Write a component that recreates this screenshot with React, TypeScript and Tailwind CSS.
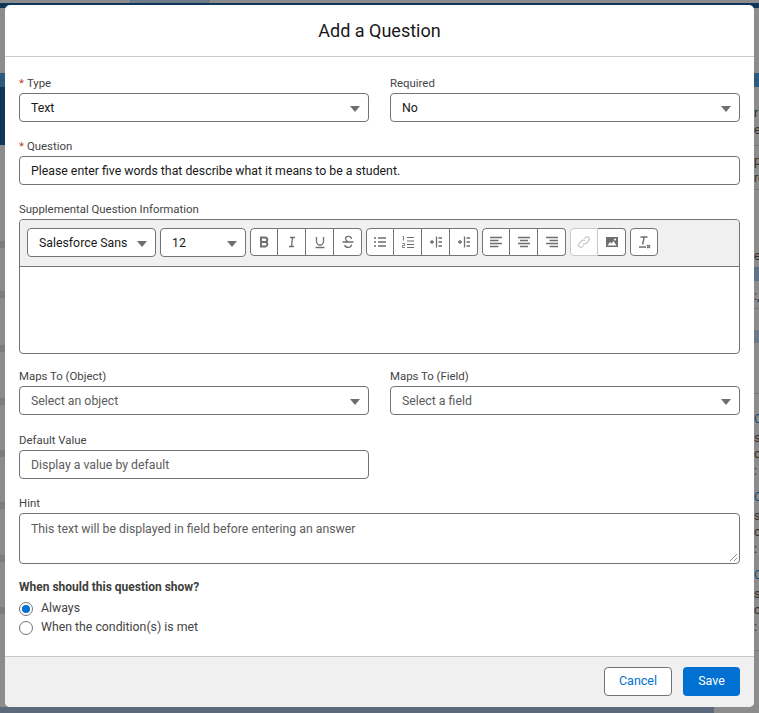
const labelCls = "block text-[11.4px] leading-[17px] text-[#444] mb-[1px]";
const fieldCls = "h-[29px] pt-[2px] rounded-[4px] border border-[#747474] bg-white flex items-center text-[12.3px]";

// bits of the dimmed page behind the modal
const LEFT_BANDS = [241, 291, 345, 398, 450, 502, 555, 607];
const RIGHT_TEXT = [
  { y: 105, t: "r" }, { y: 122, t: "es" }, { y: 153, t: "p" }, { y: 170, t: "re" }, { y: 248, t: "e" },
  { y: 288, t: ":," }, { y: 411, t: "C", link: true }, { y: 430, t: "st" }, { y: 446, t: "ol" }, { y: 463, t: ":" },
  { y: 489, t: "C", link: true }, { y: 508, t: "st" }, { y: 524, t: "ol" }, { y: 541, t: ":" },
  { y: 567, t: "C", link: true }, { y: 586, t: "st" }, { y: 602, t: "ol" }, { y: 619, t: ":" },
];
const RIGHT_LINES = [145, 189, 308, 393, 650];

function Caret() {
  return <span className="w-0 h-0 border-x-[5px] border-x-transparent border-t-[6px] border-t-[#706e6b]" />;
}

function Label({ text, required }: { text: string; required?: boolean }) {
  return (
    <label className={labelCls}>
      {required && <span className="text-[#c23934] mr-[3px]">*</span>}
      {text}
    </label>
  );
}

function SelectBox({ label, value, required, muted }: { label: string; value: string; required?: boolean; muted?: boolean }) {
  return (
    <div className="flex-1 min-w-0">
      <Label text={label} required={required} />
      <div className={`${fieldCls} justify-between pl-[11px] pr-[8px] ${muted ? "text-[#5c5c5c]" : "text-[#181818]"}`}>
        <span>{value}</span>
        <Caret />
      </div>
    </div>
  );
}

function ToolBtn({ children, first, last, disabled }: { children: React.ReactNode; first?: boolean; last?: boolean; disabled?: boolean }) {
  return (
    <button
      className={`w-[28px] h-[28px] flex items-center justify-center border-y border-r bg-white ${disabled ? "border-[#c9c9c9]" : "border-[#747474]"} ${first ? "border-l rounded-l-[4px]" : ""} ${last ? "rounded-r-[4px]" : ""}`}
    >
      {children}
    </button>
  );
}

function Ico({ children }: { children: React.ReactNode }) {
  return (
    <svg viewBox="0 0 14 14" className="w-[14px] h-[14px]" fill="none" stroke="#706e6b" strokeWidth="1.3">
      {children}
    </svg>
  );
}

function Toolbar() {
  return (
    <div className="h-[47px] bg-[#f0f0f0] border-b border-[#747474] rounded-t-[4px] flex items-start gap-[4px] pt-[8px] px-[7px]">
      <div className={`${fieldCls} w-[129px] justify-between pl-[11px] pr-[8px] text-[#181818]`}>
        <span>Salesforce Sans</span>
        <Caret />
      </div>
      <div className={`${fieldCls} w-[86px] justify-between pl-[11px] pr-[8px] text-[#181818]`}>
        <span>12</span>
        <Caret />
      </div>
      <div className="flex">
        <ToolBtn first>
          <Ico>
            <path d="M4 2.5h4a2.2 2.2 0 0 1 0 4.5H4zM4 7h4.6a2.3 2.3 0 0 1 0 4.5H4z" strokeWidth="1.9" />
          </Ico>
        </ToolBtn>
        <ToolBtn>
          <Ico>
            <path d="M5 2.5h5M4 11.5h5M7.5 2.5l-1 9" />
          </Ico>
        </ToolBtn>
        <ToolBtn>
          <Ico>
            <path d="M3.5 2v4.5a3.5 3.5 0 0 0 7 0V2M2.5 12.5h9" />
          </Ico>
        </ToolBtn>
        <ToolBtn last>
          <Ico>
            <path d="M10.5 4a3 2.5 0 0 0-6-.3c0 1.4 1 2 2.5 3.3M1.5 7h11M10.5 9.5c0 2-1.5 2.8-3.5 2.8s-3-1-3.3-2.3" />
          </Ico>
        </ToolBtn>
      </div>
      <div className="flex">
        <ToolBtn first>
          <Ico>
            <path d="M5 3h8M5 7h8M5 11h8M1 3h2M1 7h2M1 11h2" />
          </Ico>
        </ToolBtn>
        <ToolBtn>
          <Ico>
            <path d="M6 2.5h7M6 6h7M6 9.5h7M6 12.5h7" strokeWidth="1.2" />
            <path d="M1.5 1.5h1v4M1.5 8.5h2.2v2H1.5v2h2.4" strokeWidth="0.9" />
          </Ico>
        </ToolBtn>
        <ToolBtn>
          <Ico>
            <path d="M1 7h4M3 5v4M7.5 1.5v11M9.5 3H13M9.5 7H13M9.5 11H13" />
          </Ico>
        </ToolBtn>
        <ToolBtn last>
          <Ico>
            <path d="M1 7h4M3 5v4M7.5 1.5v11M9.5 3H13M9.5 7H13M9.5 11H13" />
          </Ico>
        </ToolBtn>
      </div>
      <div className="flex">
        <ToolBtn first>
          <Ico>
            <path d="M1 2.5h12M1 5.5h8.5M1 8.5h12M1 11.5h8.5" />
          </Ico>
        </ToolBtn>
        <ToolBtn>
          <Ico>
            <path d="M1 2.5h12M3 5.5h8M1 8.5h12M3 11.5h8" />
          </Ico>
        </ToolBtn>
        <ToolBtn last>
          <Ico>
            <path d="M1 2.5h12M4.5 5.5H13M1 8.5h12M4.5 11.5H13" />
          </Ico>
        </ToolBtn>
      </div>
      <div className="flex">
        <ToolBtn first disabled>
          <svg viewBox="0 0 14 14" className="w-[14px] h-[14px]" fill="none" stroke="#c9c9c9" strokeWidth="1.3">
            <path d="M6 8.2a2.3 2.3 0 0 0 3.3 0l2.5-2.6a2.3 2.3 0 0 0-3.3-3.2L7.4 3.5M8 5.8a2.3 2.3 0 0 0-3.3 0L2.2 8.4a2.3 2.3 0 0 0 3.3 3.2l1.1-1.1" />
          </svg>
        </ToolBtn>
        <ToolBtn last>
          <svg viewBox="0 0 14 14" className="w-[14px] h-[14px]">
            <path fill="#706e6b" fillRule="evenodd" d="M1 2h12v10H1zM2.5 10.5h9L8.5 6 6.5 8.5 5 7zM10 3.5a1 1 0 1 0 .01 0z" />
          </svg>
        </ToolBtn>
      </div>
      <div className="flex">
        <ToolBtn first last>
          <svg viewBox="0 0 14 14" className="w-[14px] h-[14px]" fill="none" stroke="#706e6b" strokeWidth="1.4">
            <path d="M3.5 2h7M7.2 2l-1.6 7.5M2 12h7M10 10l3 3M13 10l-3 3" />
          </svg>
        </ToolBtn>
      </div>
    </div>
  );
}

function Radio({ checked, label }: { checked?: boolean; label: string }) {
  return (
    <div className="flex items-center gap-[8px] h-[19px] text-[12.3px] text-[#444]">
      <span className="w-[14px] h-[14px] rounded-full border border-[#747474] bg-white flex items-center justify-center">
        {checked && <span className="w-[8px] h-[8px] rounded-full bg-[#0070d2]" />}
      </span>
      {label}
    </div>
  );
}

export default function App() {
  return (
    <div className="relative w-[759px] h-[713px] overflow-hidden bg-[#8c8c8c] [font-family:Roboto,sans-serif] pt-[5px] px-[5px] pb-[6px] flex">
      {/* dimmed page peeking out around the modal */}
      <div className="absolute top-0 left-[130px] w-[80px] h-[3px] bg-[#6d7a8a]" />
      <div className="absolute top-[3px] left-0 right-0 h-[5px] bg-[#0f3558]" />
      <div className="absolute top-[73px] left-0 w-[5px] h-[14px] bg-[#2f5a80]" />
      <div className="absolute top-[87px] left-0 w-[5px] h-[58px] bg-[#0f3558]" />
      {LEFT_BANDS.map((y) => (
        <div key={y} className="absolute left-0 w-[5px] h-[7px] bg-[#7d7d7d]" style={{ top: y }} />
      ))}
      <div className="absolute top-[73px] right-0 w-[5px] h-[14px] bg-[#2f5a80]" />
      <div className="absolute top-[267px] right-0 w-[5px] h-[14px] bg-[#5f7288]" />
      <div className="absolute top-[330px] right-0 w-[5px] h-[13px] bg-[#6d7a8a]" />
      {RIGHT_LINES.map((y) => (
        <div key={y} className="absolute right-0 w-[5px] h-px bg-[#777]" style={{ top: y }} />
      ))}
      {RIGHT_TEXT.map((r) => (
        <span
          key={r.y}
          className={`absolute left-[754px] text-[12.5px] leading-[15px] ${r.link ? "text-[#0f4c81]" : "text-[#333]"}`}
          style={{ top: r.y }}
        >
          {r.t}
        </span>
      ))}
      <div className="absolute bottom-0 left-0 w-[714px] h-[6px] bg-[#5c6a7c]" />

      <div className="relative flex-1 bg-white rounded-[5px] flex flex-col overflow-hidden">
        <header className="h-[52px] pb-px border-b border-[#c9c9c9] flex items-center justify-center shrink-0">
          <h1 className="text-[18px] text-[#181818]">Add a Question</h1>
        </header>

        <div className="flex-1 px-[14px] pt-[18px]">
          <div className="flex gap-[21px]">
            <SelectBox label="Type" value="Text" required />
            <SelectBox label="Required" value="No" />
          </div>

          <div className="mt-[16px]">
            <Label text="Question" required />
            <div className={`${fieldCls} px-[11px] text-[#181818]`}>Please enter five words that describe what it means to be a student.</div>
          </div>

          <div className="mt-[16px]">
            <Label text="Supplemental Question Information" />
            <div className="h-[135px] rounded-[4px] border border-[#747474] bg-white">
              <Toolbar />
            </div>
          </div>

          <div className="flex gap-[21px] mt-[14px]">
            <SelectBox label="Maps To (Object)" value="Select an object" muted />
            <SelectBox label="Maps To (Field)" value="Select a field" muted />
          </div>

          <div className="mt-[17px] w-[350px]">
            <Label text="Default Value" />
            <div className={`${fieldCls} px-[11px] text-[#5c5c5c]`}>Display a value by default</div>
          </div>

          <div className="mt-[16px]">
            <Label text="Hint" />
            <div className="relative h-[51px] rounded-[4px] border border-[#747474] bg-white px-[11px] pt-[7px] text-[12.3px] leading-[17px] text-[#5c5c5c]">
              This text will be displayed in field before entering an answer
              <svg viewBox="0 0 9 9" className="absolute right-px bottom-px w-[9px] h-[9px]" stroke="#747474" strokeWidth="0.8">
                <path d="M1 8l7-7M5 8l3-3" />
              </svg>
            </div>
          </div>

          <p className="mt-[16px] text-[12px] leading-[15px] font-bold text-[#3e3e3c]">When should this question show?</p>
          <div className="mt-[4px]">
            <Radio checked label="Always" />
            <Radio label="When the condition(s) is met" />
          </div>
        </div>

        <footer className="h-[51px] shrink-0 bg-[#f0f0f0] border-t border-[#c9c9c9] flex items-start justify-end gap-[11px] pt-[10px] px-[14px]">
          <button className="w-[68px] h-[29px] rounded-[4px] border border-[#747474] bg-white text-[12.5px] text-[#0070d2]">Cancel</button>
          <button className="w-[57px] h-[29px] rounded-[4px] bg-[#0070d2] text-[12.5px] text-white">Save</button>
        </footer>
      </div>
    </div>
  );
}
